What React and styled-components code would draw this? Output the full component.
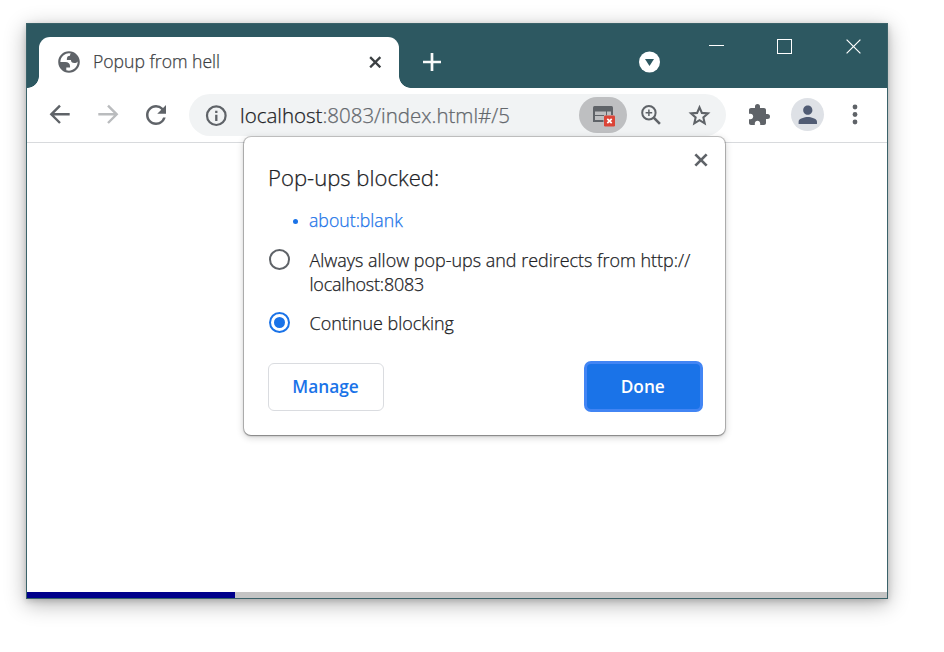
import React from "react";
import styled, { createGlobalStyle, css } from "styled-components";
import { MdRefresh, MdExtension, MdPerson } from "react-icons/md";

const TEAL = "#2d5861";
const ICON = "#5f6368";
const BLUE = "#1a73e8";

const GlobalStyle = createGlobalStyle`
  * { box-sizing: border-box; }
  body {
    margin: 0;
    background: #fff;
    font-family: "Open Sans", "Noto Sans", sans-serif;
    font-weight: 300;
    -webkit-text-stroke: 0.25px currentColor;
    color: #202124;
    overflow: hidden;
  }
  svg { display: block; flex: none; }
`;

const Desktop = styled.main`
  height: 652px;
  padding: 23px 0 0 26px;
`;

const BrowserWindow = styled.section`
  display: flex;
  flex-direction: column;
  width: 862px;
  height: 576px;
  border: 1px solid #3a6269;
  background: #fff;
  box-shadow: 0 5px 20px rgba(0, 0, 0, 0.3), 0 2px 6px rgba(0, 0, 0, 0.16);
`;

const TitleBar = styled.header`
  display: flex;
  align-items: flex-start;
  flex: none;
  height: 64px;
  padding: 0 26px 0 12px;
  background: ${TEAL};
`;

const foot = css`
  content: "";
  position: absolute;
  bottom: 0;
  width: 12px;
  height: 12px;
`;

const Tab = styled.div`
  position: relative;
  display: flex;
  align-items: center;
  width: 360px;
  height: 51px;
  margin-top: 13px;
  padding: 0 17.5px 1px 19px;
  border-radius: 11px 11px 0 0;
  background: #fff;
  &::before {
    ${foot}
    left: -12px;
    background: radial-gradient(circle at 0 0, transparent 11.5px, #fff 12.2px);
  }
  &::after {
    ${foot}
    right: -12px;
    background: radial-gradient(circle at 100% 0, transparent 11.5px, #fff 12.2px);
  }
`;

const TabTitle = styled.span`
  flex: 1;
  margin: 0 0 2px 13px;
  font-size: 17.6px;
  line-height: 24px;
  color: #3c4043;
`;

const NewTab = styled.div`
  margin: 29px auto 0 24px;
`;

const TabSearch = styled.div`
  margin: 27px 49px 0 0;
`;

const WindowControls = styled.div`
  display: flex;
  gap: 53px;
  margin-top: 15px;
`;

const Toolbar = styled.nav`
  position: relative;
  display: flex;
  align-items: center;
  flex: none;
  height: 55px;
  padding-left: 22px;
  border-bottom: 1px solid #d8dadd;
  color: ${ICON};
`;

const ToolbarItem = styled.div`
  flex: none;
  margin-left: ${(p) => p.$gap || 0}px;
`;

const Omnibox = styled.div`
  display: flex;
  align-items: center;
  flex: none;
  width: 537px;
  height: 42px;
  margin-left: 18px;
  padding: 0 14.5px 0 15px;
  border-radius: 21px;
  background: #f1f3f4;
`;

const Url = styled.span`
  flex: 1;
  margin: 0 0 1px 11px;
  font-size: 20.5px;
  line-height: 28px;
  color: #63676c;
`;

const Host = styled.span`
  color: #202124;
`;

const BlockedChip = styled.div`
  display: flex;
  align-items: center;
  width: 48px;
  height: 36px;
  padding: 3px 0 0 14px;
  border-radius: 18px;
  background: #bebfc1;
`;

const Avatar = styled.div`
  display: flex;
  align-items: center;
  justify-content: center;
  flex: none;
  width: 33px;
  height: 33px;
  margin: 0 0 1px 20px;
  border-radius: 50%;
  background: #dee1e6;
  color: #515c74;
`;

const Bubble = styled.aside`
  position: absolute;
  top: 49px;
  left: 217px;
  width: 481px;
  height: 298px;
  padding: 25px 23px 0 24px;
  border-radius: 7px;
  background: #fff;
  color: #202124;
  box-shadow: 0 0 0 1px rgba(0, 0, 0, 0.2), 0 1px 2px rgba(0, 0, 0, 0.3),
    0 2px 7px 1px rgba(0, 0, 0, 0.16);
`;

const BubbleHead = styled.div`
  display: flex;
  justify-content: space-between;
  height: 46px;
`;

const BubbleTitle = styled.h1`
  margin: 0;
  font-size: 22.1px;
  font-weight: inherit;
  line-height: 30px;
`;

const BubbleClose = styled.div`
  margin: -9.500px -5.500px 0 0;
`;

const BlockedLink = styled.div`
  display: flex;
  align-items: center;
  gap: 11px;
  height: 24px;
  padding-left: 25px;
  font-size: 17.7px;
  color: ${BLUE};
  &::before {
    content: "";
    width: 5px;
    height: 5px;
    margin-top: 2px;
    border-radius: 50%;
    background: currentColor;
  }
`;

const Option = styled.div`
  display: flex;
  align-items: flex-start;
  margin-top: ${(p) => p.$top}px;
  font-size: 17.95px;
  line-height: 24px;
`;

const Origin = styled.span`
  letter-spacing: -0.2px;
`;

const Radio = styled.span`
  flex: none;
  display: flex;
  align-items: center;
  justify-content: center;
  width: 21px;
  height: 21px;
  margin: 1px 19.5px 0 1px;
  border: 2px solid ${(p) => (p.$checked ? BLUE : ICON)};
  border-radius: 50%;
  &::after {
    content: "";
    width: 11px;
    height: 11px;
    border-radius: 50%;
    background: ${(p) => (p.$checked ? BLUE : "transparent")};
  }
`;

const Actions = styled.div`
  display: flex;
  align-items: center;
  justify-content: space-between;
  margin-top: 26px;
`;

const Button = styled.button`
  padding: 0 1px 1px 0;
  width: 116px;
  height: 48px;
  border: 1px solid #dadce0;
  border-radius: 6px;
  background: #fff;
  color: ${BLUE};
  font: 600 17.3px "Open Sans", sans-serif;
  -webkit-text-stroke: 0;
  ${(p) =>
    p.$primary &&
    css`
      width: 118.5px;
      height: 51px;
      margin-right: -0.5px;
      border: 3px solid #4285f4;
      border-radius: 7px;
      background: ${BLUE};
      color: #fff;
    `}
`;

const Page = styled.div`
  flex: 1;
`;

const Progress = styled.div`
  flex: none;
  height: 6px;
  background: #c4c4c4;
`;

const ProgressFill = styled.div`
  width: 208px;
  height: 6px;
  background: #00008b;
`;

function Globe() {
  return (
    <svg width="22" height="22" viewBox="1.800 1.800 20.400 20.400">
      <path
        d="M12 2c5.520 0 10 4.480 10 10s-4.480 10-10 10S2 17.520 2 12 6.480 2 12 2zM4 12h4.400c3.407.022 4.922 1.730 4.543 5.127H9.488v2.470a8.004 8.004 0 0 0 10.498-8.083C19.327 12.504 18.332 13 17 13c-2.137 0-3.206-.916-3.206-2.750h-3.748c-.274-2.728.683-4.092 2.870-4.092 0-.975.327-1.597.811-1.970A8.004 8.004 0 0 0 4 12z"
        fill={ICON}
      />
    </svg>
  );
}

function Cross({ size, stroke, color }) {
  const a = stroke / 2;
  const b = size - a;
  return (
    <svg width={size} height={size} viewBox={`0 0 ${size} ${size}`}>
      <path d={`M${a} ${a}L${b} ${b}M${b} ${a}L${a} ${b}`} stroke={color} strokeWidth={stroke} />
    </svg>
  );
}

function Arrow({ forward }) {
  return (
    <svg width="22" height="22" viewBox="0 0 22 22" fill="none" strokeWidth="2.400">
      <path
        d={
          forward
            ? "M1.300 10.300H19.500M11 1.600L19.700 10.300L11 19"
            : "M20.700 10.300H2.500M11 1.600L2.300 10.300L11 19"
        }
        stroke={forward ? "#babcbe" : ICON}
      />
    </svg>
  );
}

function InfoIcon() {
  return (
    <svg width="25" height="25" viewBox="0 0 25 25" fill="none" stroke={ICON}>
      <circle cx="12.300" cy="12.700" r="9.300" strokeWidth="2.200" />
      <path d="M12.300 11.700V18M12.300 7.700V10" strokeWidth="2.300" />
    </svg>
  );
}

function StarIcon() {
  return (
    <svg width="25" height="25" viewBox="0 0 24 24">
      <path
        d="M12 4.200L14.300 9.500L20.100 10L15.700 13.800L17 19.500L12 16.500L7 19.500L8.300 13.800L3.900 10L9.700 9.500Z"
        fill="none"
        stroke={ICON}
        strokeWidth="2"
      />
    </svg>
  );
}

function BlockedPopupIcon() {
  return (
    <svg width="23" height="21" viewBox="0 0 23 21" fill="none">
      <path d="M0 5.500V1.500Q0 0 1.500 0H18.500Q20 0 20 1.500V5.500Z" fill={ICON} />
      <path d="M1 5V15H10.500M19 5V9" stroke={ICON} strokeWidth="2" />
      <path d="M2 9.500H11M13.500 5V9.500" stroke={ICON} />
      <rect x="11" y="9.500" width="11" height="11" rx="1.200" fill="#db4437" />
      <path d="M14.300 12.800L18.700 17.200M18.700 12.800L14.300 17.200" stroke="#fff" strokeWidth="1.700" />
    </svg>
  );
}

function ZoomIcon() {
  return (
    <svg width="20" height="20" viewBox="0 0 20 20" fill="none" stroke={ICON}>
      <circle cx="7.900" cy="7.800" r="6.700" strokeWidth="2" />
      <path d="M12.700 12.600L18.900 18.800" strokeWidth="2.600" />
      <path d="M4.600 7.800H11.200M7.900 4.500V11.100" strokeWidth="1.500" />
    </svg>
  );
}

export default function App() {
  return (
    <Desktop>
      <GlobalStyle />
      <BrowserWindow>
        <TitleBar>
          <Tab>
            <Globe />
            <TabTitle>Popup from hell</TabTitle>
            <Cross size={12.5} stroke={2.3} color="#3c4043" />
          </Tab>
          <NewTab>
            <svg width="18" height="18" viewBox="0 0 18 18">
              <path d="M9 0V18M0 9H18" stroke="#f8fafa" strokeWidth="2.700" />
            </svg>
          </NewTab>
          <TabSearch>
            <svg width="21" height="22" viewBox="0 0 21 22">
              <circle cx="10.500" cy="11" r="10.500" fill="#fff" />
              <path d="M6 8H15L10.500 15Z" fill={TEAL} />
            </svg>
          </TabSearch>
          <WindowControls>
            <svg width="15" height="15">
              <path d="M0 6.500H15" stroke="#fff" />
            </svg>
            <svg width="16" height="15">
              <rect x=".5" y=".5" width="14" height="14" fill="none" stroke="#fff" />
            </svg>
            <Cross size={15} stroke={1.2} color="#fff" />
          </WindowControls>
        </TitleBar>
        <Toolbar>
          <ToolbarItem>
            <Arrow />
          </ToolbarItem>
          <ToolbarItem $gap={26}>
            <Arrow forward />
          </ToolbarItem>
          <ToolbarItem $gap={22}>
            <MdRefresh size={30} />
          </ToolbarItem>
          <Omnibox>
            <InfoIcon />
            <Url>
              <Host>localhost</Host>:8083/index.html#/5
            </Url>
            <BlockedChip>
              <BlockedPopupIcon />
            </BlockedChip>
            <ToolbarItem $gap={14}>
              <ZoomIcon />
            </ToolbarItem>
            <ToolbarItem $gap={25.5}>
              <StarIcon />
            </ToolbarItem>
          </Omnibox>
          <ToolbarItem $gap={21}>
            <MdExtension size={24} />
          </ToolbarItem>
          <Avatar>
            <MdPerson size={27.6} />
          </Avatar>
          <ToolbarItem $gap={28}>
            <svg width="6" height="22" viewBox="0 0 6 22" fill={ICON}>
              <circle cx="3" cy="3" r="2.400" />
              <circle cx="3" cy="10.500" r="2.400" />
              <circle cx="3" cy="18" r="2.400" />
            </svg>
          </ToolbarItem>
          <Bubble>
            <BubbleHead>
              <BubbleTitle>Pop-ups blocked:</BubbleTitle>
              <BubbleClose>
                <Cross size={14} stroke={2.7} color={ICON} />
              </BubbleClose>
            </BubbleHead>
            <BlockedLink>about:blank</BlockedLink>
            <Option $top={16}>
              <Radio />
              <span>
                Always allow pop-ups and redirects from http://
                <br />
                <Origin>localhost:8083</Origin>
              </span>
            </Option>
            <Option $top={15}>
              <Radio $checked />
              <span>Continue blocking</span>
            </Option>
            <Actions>
              <Button>Manage</Button>
              <Button $primary>Done</Button>
            </Actions>
          </Bubble>
        </Toolbar>
        <Page />
        <Progress>
          <ProgressFill />
        </Progress>
      </BrowserWindow>
    </Desktop>
  );
}
